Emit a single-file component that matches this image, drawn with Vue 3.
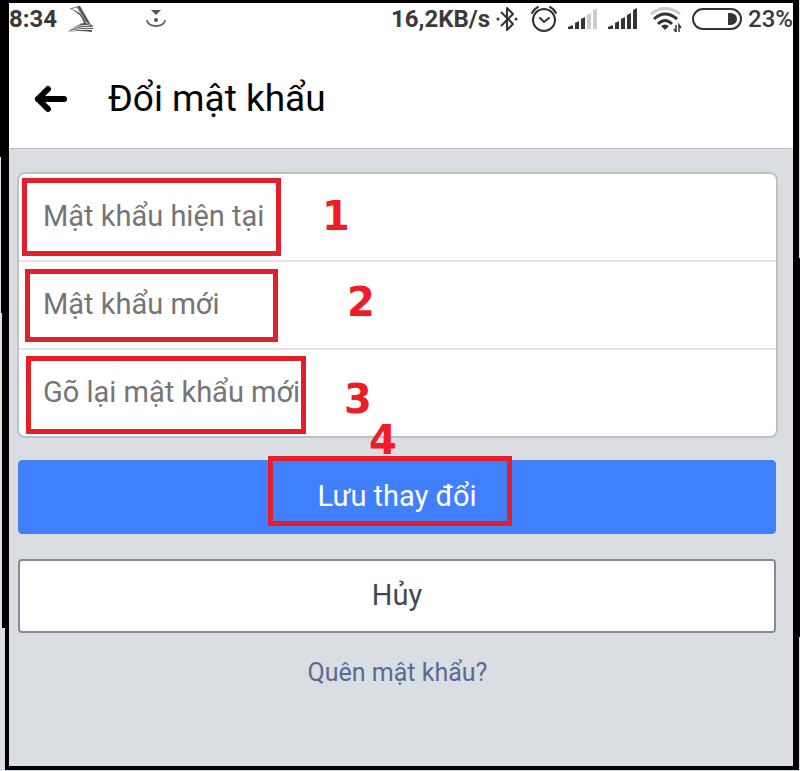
<template>
  <div class="page">
    <div class="screen">
      <div class="status-bar">
        <span class="clock">8:34</span>
        <svg class="icon-sheet" width="28" height="28" viewBox="0 0 28 28" fill="#555" aria-hidden="true">
          <path d="M10 1 L13 1 L24 20 L20 18 Z" />
          <path d="M3 4 L10 2 L19 17" fill="none" stroke="#777" stroke-width="1" />
          <path d="M3 4 Q14 8 17 18 L12 19 L20 20 L18 16 Q13 5 3 4 Z" />
          <path d="M1 27 Q8 20 18 18 L25 20 L26 22 Q12 21 1 27 Z" />
          <path d="M1 27 Q12 22 26 23 L26 24 Q12 23 1 27 Z" />
          <path d="M1 27 Q13 24 25 25 L25 27 Q12 25 1 27 Z" />
          <path d="M4 24 Q12 20 23 20" fill="none" stroke="#ddd" stroke-width="1" />
        </svg>
        <svg class="icon-download" width="22" height="22" viewBox="0 0 22 22" aria-hidden="true">
          <path d="M6 2 H16 L11 7 Z" fill="#555" />
          <circle cx="11" cy="12" r="2" fill="#555" />
          <path d="M2 13 Q4 18 11 18 Q18 18 20 13" fill="none" stroke="#666" stroke-width="2" stroke-linecap="round" />
        </svg>

        <span class="speed">16,2KB/s</span>
        <svg class="icon-bluetooth" width="22" height="28" viewBox="0 0 22 28" fill="none" stroke="#333" stroke-width="2" aria-hidden="true">
          <path d="M5 7 L17 19 L11 25 V3 L17 9 L5 21" stroke-linejoin="round" />
          <circle cx="2" cy="14" r="1.5" fill="#333" stroke="none" />
          <circle cx="20" cy="14" r="1.5" fill="#333" stroke="none" />
        </svg>
        <svg class="icon-alarm" width="28" height="28" viewBox="0 0 28 28" fill="none" stroke="#333" stroke-width="2" stroke-linecap="round" aria-hidden="true">
          <circle cx="14" cy="15" r="11" />
          <path d="M10 13 L14 17 L19 13" />
          <path d="M2 8 Q4 4 8 2 M20 2 Q24 4 26 8" />
        </svg>
        <svg
          v-for="(signal, index) in signals"
          :key="index"
          class="icon-signal"
          width="30"
          height="22"
          viewBox="0 0 30 22"
          aria-hidden="true"
        >
          <path d="M0 21 V19 L5 17 V21 Z" fill="#333" />
          <path d="M7 21 V15 L11 13 V21 Z" fill="#333" />
          <path d="M13 21 V11 L17 9 V21 Z" fill="#333" />
          <path d="M19 21 V7 L23 5 V21 Z" :fill="signal > 3 ? '#333' : '#ccc'" />
          <path d="M25 21 V2 L29 0 V21 Z" :fill="signal > 4 ? '#333' : '#ccc'" />
        </svg>
        <svg class="icon-wifi" width="32" height="26" viewBox="0 0 32 26" fill="none" stroke="#333" stroke-width="3" aria-hidden="true">
          <path d="M1 8 Q15 -3 30 8" stroke="#ccc" />
          <path d="M4 13 Q15 3 27 13" />
          <path d="M8 18 Q15 11 22 18" />
          <path d="M11 20 Q15 17 19 20 L15 24 Z" fill="#333" stroke="none" />
          <path d="M26 19 V26 L24 23 M29 26 V19 L31 22" stroke-width="1.5" />
        </svg>
        <svg class="icon-battery" width="50" height="22" viewBox="0 0 50 22" aria-hidden="true">
          <rect x="1" y="1" width="48" height="20" rx="10" fill="none" stroke="#333" stroke-width="2" />
          <path d="M36 5 H39 Q45 6 45 11 Q45 16 39 17 H36 Z" fill="#333" />
        </svg>
        <span class="percent">23%</span>
      </div>

      <header class="header">
        <button class="back" type="button" aria-label="Quay lại">
          <svg width="34" height="28" viewBox="0 0 34 28" fill="none" stroke="#000" stroke-width="6" stroke-linecap="round" stroke-linejoin="round" aria-hidden="true">
            <path d="M30 14 H4" />
            <path d="M14 4 L4 14 L14 24" />
          </svg>
        </button>
        <h1>Đổi mật khẩu</h1>
      </header>

      <form class="form" @submit.prevent>
        <div class="fields">
          <div v-for="field in fields" :key="field.id" class="field">
            <input :id="field.id" v-model="field.value" type="password" :placeholder="field.label" :aria-label="field.label" />
            <span class="mark" :class="`mark-${field.step}`"></span>
            <span class="step" :class="`step-${field.step}`">{{ field.step }}</span>
          </div>
        </div>

        <div class="save-row">
          <button class="btn save" type="submit">Lưu thay đổi</button>
          <span class="mark mark-4"></span>
          <span class="step step-4">4</span>
        </div>
        <button class="btn cancel" type="button">Hủy</button>
        <a class="forgot" href="#">Quên mật khẩu?</a>
      </form>
    </div>
  </div>
</template>

<script setup>
import { reactive } from 'vue';

// Active bars for each SIM
const signals = [3, 5];

const fields = reactive([
  { id: 'current-password', label: 'Mật khẩu hiện tại', step: 1, value: '' },
  { id: 'new-password', label: 'Mật khẩu mới', step: 2, value: '' },
  { id: 'repeat-password', label: 'Gõ lại mật khẩu mới', step: 3, value: '' },
]);
</script>

<style>
body {
  margin: 0;
  background: #000;
}
</style>

<style scoped>
.page {
  display: flex;
  box-sizing: border-box;
  min-height: 100vh;
  padding: 3px 7px 5px 9px;
  font-family: Roboto, "Noto Sans", sans-serif;
  /* uneven outer edge of the black frame */
  background:
    linear-gradient(#dcdfe5, #dcdfe5) left bottom / 5px 143px no-repeat,
    linear-gradient(#dcdfe5, #dcdfe5) left bottom / 2px 458px no-repeat,
    linear-gradient(#dcdfe5, #dcdfe5) left bottom / 1px 614px no-repeat,
    linear-gradient(#dcdfe5, #dcdfe5) right top / 1px 258px no-repeat,
    linear-gradient(#dcdfe5, #dcdfe5) right bottom / 1px 134px no-repeat,
    linear-gradient(#dcdfe5, #dcdfe5) left bottom / 100% 1px no-repeat,
    #000;
}

.screen {
  display: flex;
  flex-direction: column;
  flex: 1;
  min-width: 0;
  background: #dadde2;
}

.status-bar {
  display: flex;
  align-items: center;
  height: 32px;
  background: #fff;
  color: #3a3a3a;
  font-size: 24px;
  line-height: 32px;
  white-space: nowrap;
}

.status-bar svg {
  flex: none;
}

.clock {
  font-weight: 700;
}

.icon-sheet {
  margin-left: 10px;
}

.icon-download {
  margin-left: 50px;
}

.speed {
  margin-left: auto;
  font-weight: 700;
}

.icon-bluetooth {
  margin-left: 6px;
}

.icon-alarm {
  margin-left: 12px;
}

.icon-signal {
  margin-left: 10px;
}

.icon-wifi {
  margin-left: 12px;
}

.icon-battery {
  margin-left: 10px;
}

.percent {
  margin-left: 6px;
  font-weight: 500;
}

.header {
  display: flex;
  align-items: center;
  height: 114px;
  box-sizing: border-box;
  padding: 14px 24px 0 25px;
  background: #fff;
  border-bottom: 1px solid #bfc1c6;
}

.back {
  display: flex;
  padding: 0;
  border: 0;
  background: none;
}

h1 {
  margin: 0 0 0 40px;
  font-size: 37px;
  font-weight: 400;
  line-height: 48px;
  color: #000;
}

.form {
  display: flex;
  flex-direction: column;
  padding: 23px 15px 24px 8px;
}

.fields {
  border: 2px solid #bfc1c5;
  border-radius: 8px;
  background: #fff;
}

.field {
  position: relative;
  height: 86px;
}

.field + .field {
  border-top: 2px solid #e2e3e5;
}

.field input {
  box-sizing: border-box;
  width: 100%;
  height: 100%;
  padding: 0 24px 2px;
  border: 0;
  border-radius: 8px;
  outline: 0;
  background: transparent;
  font-family: inherit;
  font-size: 29px;
  color: #333;
}

.field input::placeholder {
  color: #757575;
  opacity: 1;
}

.save-row {
  position: relative;
  margin: 22px 2px 0 1px;
}

.btn {
  display: block;
  box-sizing: border-box;
  width: 100%;
  height: 74px;
  padding: 0 0 2px;
  border-radius: 4px;
  font-family: inherit;
  font-size: 29px;
  line-height: 40px;
}

.save {
  border: 1px solid #4a7fe0;
  background: #4080ff;
  color: #fff;
}

.cancel {
  width: auto;
  margin: 25px 2px 0 1px;
  border: 2px solid #878a90;
  background: #fff;
  color: #444950;
}

.forgot {
  align-self: center;
  margin-top: 24px;
  font-size: 25px;
  line-height: 32px;
  color: #576b95;
  text-decoration: none;
}

/* Red guide boxes and step numbers over the form */
.mark {
  position: absolute;
  box-sizing: border-box;
  border: 5px solid #e3202a;
  pointer-events: none;
}

.mark-1 {
  top: 4px;
  left: 3px;
  width: 259px;
  height: 78px;
}

.mark-2 {
  top: 7px;
  left: 6px;
  width: 253px;
  height: 73px;
}

.mark-3 {
  top: 6px;
  left: 7px;
  width: 280px;
  height: 78px;
}

.mark-4 {
  top: -4px;
  left: calc(50% - 129px);
  width: 244px;
  height: 70px;
}

.step {
  position: absolute;
  font-family: "DejaVu Sans", sans-serif;
  font-size: 40px;
  font-weight: 700;
  line-height: 40px;
  color: #ee1c25;
  pointer-events: none;
}

.step-1 {
  top: 22px;
  left: 303px;
}

.step-2 {
  top: 20px;
  left: 328px;
}

.step-3 {
  top: 29px;
  left: 325px;
}

.step-4 {
  top: -40px;
  left: calc(50% - 28px);
}
</style>
